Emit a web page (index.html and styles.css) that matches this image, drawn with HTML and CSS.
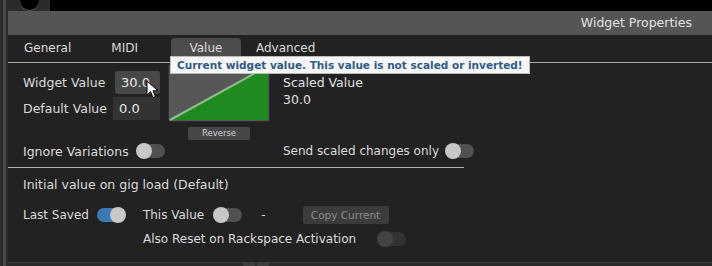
FILE: index.html
```html
<!DOCTYPE html>
<html lang="en">
  <head>
    <meta charset="UTF-8" />
    <title>Widget Properties</title>
    <link rel="stylesheet" href="styles.css">
  </head>
  <body>
    <div class="frame">
      <div class="side"><span class="rail"></span></div>
      <div class="main">
        <div class="topstrip">
          <div class="knobholder"><span class="knob"></span></div>
        </div>
        <div class="header">Widget Properties</div>

        <div class="panel">
          <div class="tabs">
            <span class="tab tab-general">General</span>
            <span class="tab tab-midi">MIDI</span>
            <span class="tab tab-value">Value</span>
            <span class="tab tab-adv">Advanced</span>
          </div>

          <div class="tooltip">Current widget value. This value is not scaled or inverted!</div>

          <div class="values">
            <div class="fields">
              <div class="field">
                <span class="label">Widget Value</span>
                <span class="input hover">30.0</span>
              </div>
              <div class="field">
                <span class="label">Default Value</span>
                <span class="input">0.0</span>
              </div>
              <svg class="cursor" width="14" height="19" viewBox="0 0 14 19">
                <path d="M1 1 L1 15 L4.5 11.5 L7 17.5 L9.5 16.5 L7 10.8 L12 10.8 Z" fill="#fff" stroke="#000" stroke-width="1"/>
              </svg>
            </div>

            <div class="curve">
              <div class="graph">
                <svg width="100" height="56" viewBox="0 0 100 56">
                  <polygon points="1,55 99,1 99,55" fill="#1f8a1f"/>
                  <line x1="1" y1="55" x2="99" y2="1" stroke="#8fbf8f" stroke-width="2"/>
                </svg>
              </div>
              <button class="small-btn">Reverse</button>
            </div>

            <div class="scaled">
              <div>Scaled Value</div>
              <div>30.0</div>
            </div>
          </div>

          <div class="options">
            <div class="opt opt-left">
              <span>Ignore Variations</span>
              <span class="toggle"></span>
            </div>
            <div class="opt opt-send">
              <span>Send scaled changes only</span>
              <span class="toggle"></span>
            </div>
          </div>

          <div class="initial">
            <div class="section-title">Initial value on gig load (Default)</div>
            <div class="load-row">
              <span>Last Saved</span>
              <span class="toggle on"></span>
              <span class="this-value">This Value</span>
              <span class="toggle"></span>
              <span class="dash">-</span>
              <button class="copy-btn">Copy Current</button>
            </div>
            <div class="reset-row">
              <span>Also Reset on Rackspace Activation</span>
              <span class="toggle disabled"></span>
            </div>
          </div>
        </div>

        <div class="footer">
          <span class="grip"></span><span class="grip"></span>
        </div>
      </div>
    </div>
  </body>
</html>
```

FILE: styles.css
```css
*,
*::before,
*::after {
  margin: 0;
  padding: 0;
  box-sizing: border-box;
}

body {
  font-family: "DejaVu Sans", Verdana, sans-serif;
  font-size: 12.5px;
  color: #dcdcdc;
  background: #000;
  width: 712px;
  height: 266px;
  overflow: hidden;
}

.frame {
  display: flex;
  height: 266px;
}

.side {
  width: 8px;
  background: #2b2b2b;
  padding-left: 3px;
}
.side .rail {
  display: block;
  width: 3px;
  height: 100%;
  background: #474747;
}

.main {
  flex: 1;
  display: flex;
  flex-direction: column;
}

.topstrip {
  height: 11px;
  background: #000;
}
.knobholder {
  width: 42px;
  height: 11px;
  background: #2b2b2b;
  overflow: hidden;
  padding-left: 12px;
}
.knobholder .knob {
  display: block;
  width: 19px;
  height: 19px;
  margin-top: -9px;
  border-radius: 50%;
  background: #000;
  box-shadow: 0 1px 0 #555;
}

.header {
  height: 24px;
  background: #555;
  color: #e2e2e2;
  font-size: 12.5px;
  text-align: right;
  padding-right: 20px;
  line-height: 24px;
}

.panel {
  flex: 1;
  background: #222;
  position: relative;
  border-bottom: 1px solid #3a3a3a;
}

.tabs {
  display: flex;
  align-items: flex-start;
  height: 28px;
  padding: 3px 0 0 16px;
  border-bottom: 1px solid #a8a8a8;
  font-size: 12px;
}
.tab {
  height: 20px;
  line-height: 20px;
  color: #dcdcdc;
}
.tab-general { margin-right: 40px; }
.tab-midi { margin-right: 33px; }
.tab-value {
  width: 70px;
  text-align: center;
  background: #4c4c4c;
  border-radius: 4px 4px 0 0;
}
.tab-adv { margin-left: 15px; }

.tooltip {
  position: absolute;
  left: 162px;
  top: 21px;
  height: 18px;
  padding: 0 6px;
  background: #f7f7f7;
  border: 1px solid #bbb;
  color: #2f5b87;
  font-weight: bold;
  font-size: 10.5px;
  line-height: 16px;
  white-space: nowrap;
  z-index: 2;
}

.values {
  display: flex;
  padding: 1px 0 0 15px;
  height: 78px;
}

.fields {
  position: relative;
  width: 145px;
  padding-top: 7px;
}
.field {
  display: flex;
  align-items: center;
  height: 22px;
  margin-bottom: 4px;
}
.field .label {
  width: 90px;
}
.input {
  width: 47px;
  height: 23px;
  line-height: 23px;
  padding-left: 6px;
  background: #333;
  font-size: 13px;
  color: #e6e6e6;
}
.input.hover {
  background: #484848;
  border-radius: 3px;
  margin-left: 2px;
  width: 45px;
}
.cursor {
  position: absolute;
  left: 123px;
  top: 16px;
}

.curve {
  width: 102px;
  display: flex;
  flex-direction: column;
  align-items: center;
}
.graph {
  width: 102px;
  height: 58px;
  background: #575757;
  border: 1px solid #2e2e2e;
  border-radius: 2px;
}
.graph svg {
  display: block;
}
.small-btn {
  margin-top: 5px;
  width: 62px;
  height: 13px;
  border: none;
  border-radius: 2px;
  background: #474747;
  color: #cfcfcf;
  font-family: "DejaVu Sans", Verdana, sans-serif;
  font-size: 8.5px;
  line-height: 13px;
}

.scaled {
  margin-left: 13px;
  padding-top: 10px;
  line-height: 17px;
  color: #e0e0e0;
}

.options {
  display: flex;
  align-items: center;
  width: 456px;
  height: 27px;
  padding: 0 0 6px 15px;
  border-bottom: 1px solid #b0b0b0;
  white-space: nowrap;
}
.opt {
  display: flex;
  align-items: center;
  gap: 8px;
  flex-shrink: 0;
}
.opt-left {
  width: 260px;
}
.opt-send {
  font-size: 12px;
  gap: 7px;
}

.toggle {
  position: relative;
  display: inline-block;
  flex-shrink: 0;
  width: 28px;
  height: 14px;
  border-radius: 7px;
  background: #505050;
}
.toggle::after {
  content: "";
  position: absolute;
  left: -1px;
  top: -1px;
  width: 16px;
  height: 16px;
  border-radius: 50%;
  background: #c8c8c8;
}
.toggle.on {
  background: #3c78b8;
}
.toggle.on::after {
  left: 13px;
}
.toggle.disabled {
  background: #333;
}
.toggle.disabled::after {
  background: #434343;
}

.initial {
  padding: 8px 0 0 15px;
}
.section-title {
  height: 18px;
  line-height: 18px;
}
.load-row {
  display: flex;
  align-items: center;
  height: 20px;
  margin-top: 11px;
  font-size: 12px;
}
.load-row .toggle {
  margin-left: 8px;
}
.load-row .this-value + .toggle {
  margin-left: 10px;
}
.this-value {
  margin-left: 18px;
}
.dash {
  margin-left: 19px;
}
.copy-btn {
  margin-left: 37px;
  width: 86px;
  height: 18px;
  border: none;
  border-radius: 2px;
  background: #3b3b3b;
  color: #8c8c8c;
  font-family: "DejaVu Sans", Verdana, sans-serif;
  font-size: 10.5px;
}
.reset-row {
  display: flex;
  align-items: center;
  gap: 22px;
  height: 20px;
  margin: 4px 0 0 120px;
  font-size: 12px;
}

.footer {
  height: 3px;
  background: #2b2b2b;
  padding-left: 235px;
  display: flex;
  gap: 2px;
}
.grip {
  width: 12px;
  height: 3px;
  background: #3e3e3e;
}
```
